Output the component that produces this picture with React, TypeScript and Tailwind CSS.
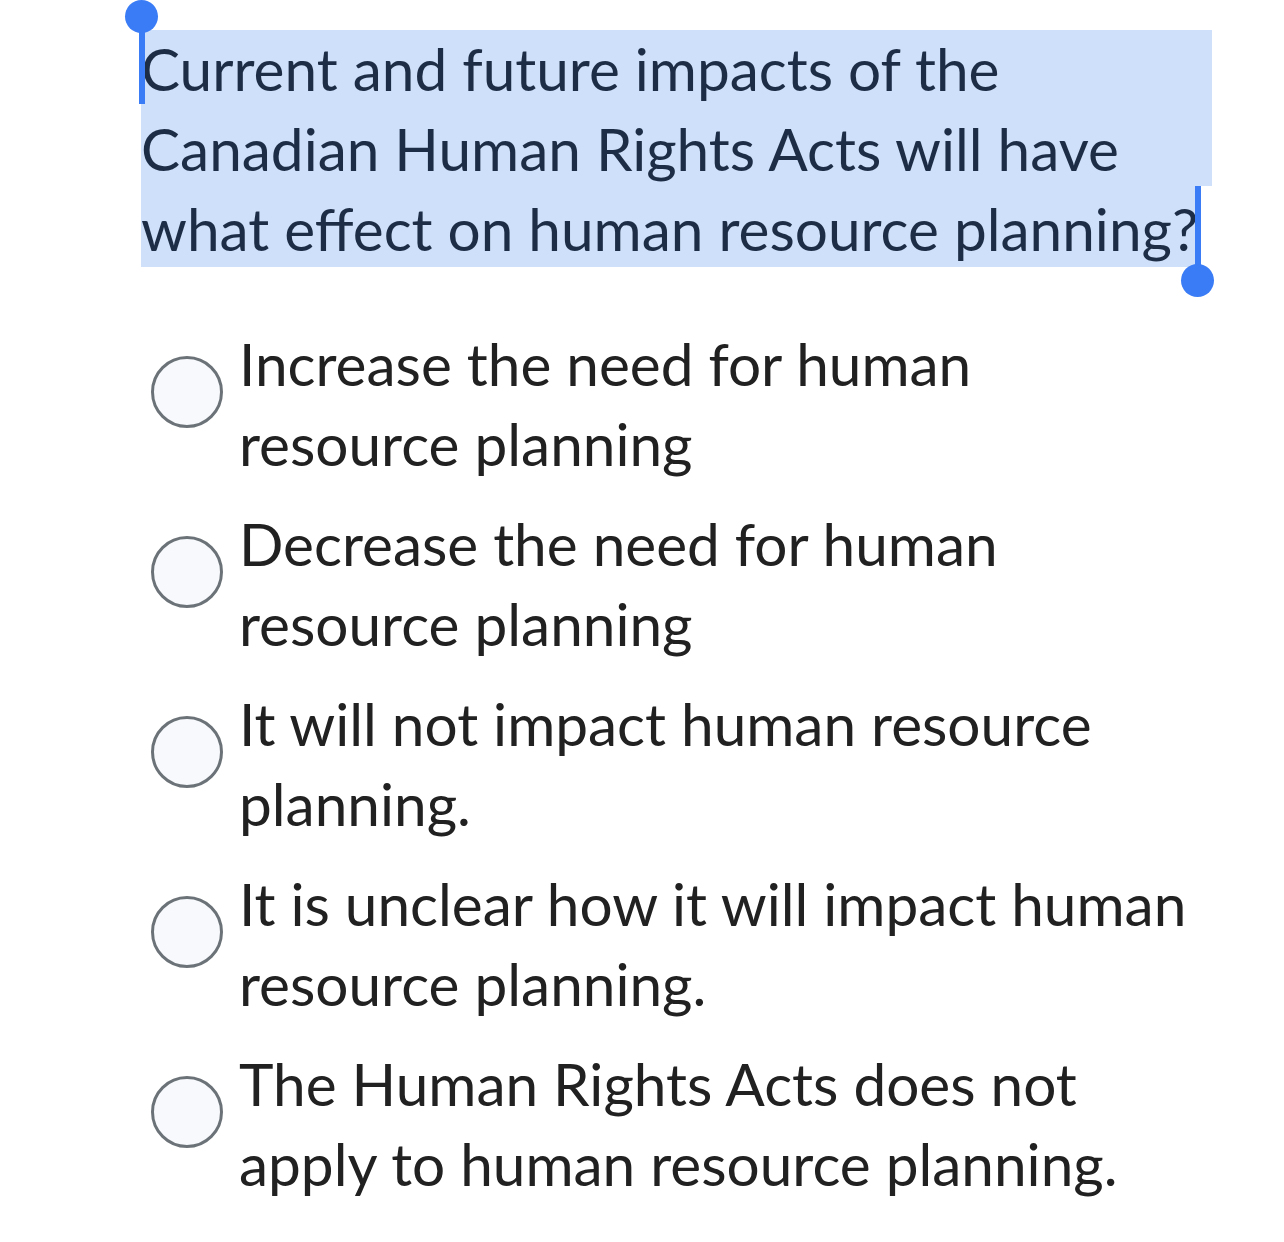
import React from "react";

const options = [
  "Increase the need for human resource planning",
  "Decrease the need for human resource planning",
  "It will not impact human resource planning.",
  "It is unclear how it will impact human resource planning.",
  "The Human Rights Acts does not apply to human resource planning.",
];

export default function App() {
  return (
    <div
      className="min-h-[1242px] w-[1284px] bg-white pl-[141px] pt-[28px]"
      style={{ fontFamily: "Lato, 'Open Sans', sans-serif" }}
    >
      <div className="relative w-[1071px]">
        <div className="absolute left-0 right-0 top-[2px] h-[156px] bg-[#cfe1fa]" />
        <div className="absolute left-0 top-[158px] h-[81px] w-[1055px] bg-[#cfe1fa]" />
        <p className="relative text-[58.5px] leading-[80px] text-[#1e2d46]">
          Current and future impacts of the Canadian Human Rights Acts will have what effect on
          human resource planning?
        </p>
        <div className="absolute left-[-16px] top-[-28px] h-[33px] w-[33px] rounded-full bg-[#3a7cf5]" />
        <div className="absolute left-[-2px] top-[2px] h-[74px] w-[6px] bg-[#3a7cf5]" />
        <div className="absolute left-[1054px] top-[158px] h-[79px] w-[6px] bg-[#3a7cf5]" />
        <div className="absolute left-[1040px] top-[236px] h-[33px] w-[33px] rounded-full bg-[#3a7cf5]" />
      </div>
      <div className="mt-[55px] flex w-[1050px] flex-col gap-[20px] pl-[10px]">
        {options.map((o) => (
          <div key={o} className="flex items-start gap-[16px]">
            <div className="mt-[33px] h-[72px] w-[72px] shrink-0 rounded-full border-[3px] border-[#6c7378] bg-[#f7f9fc]" />
            <p className="text-[58.5px] leading-[80px] text-[#212121]">{o}</p>
          </div>
        ))}
      </div>
    </div>
  );
}
